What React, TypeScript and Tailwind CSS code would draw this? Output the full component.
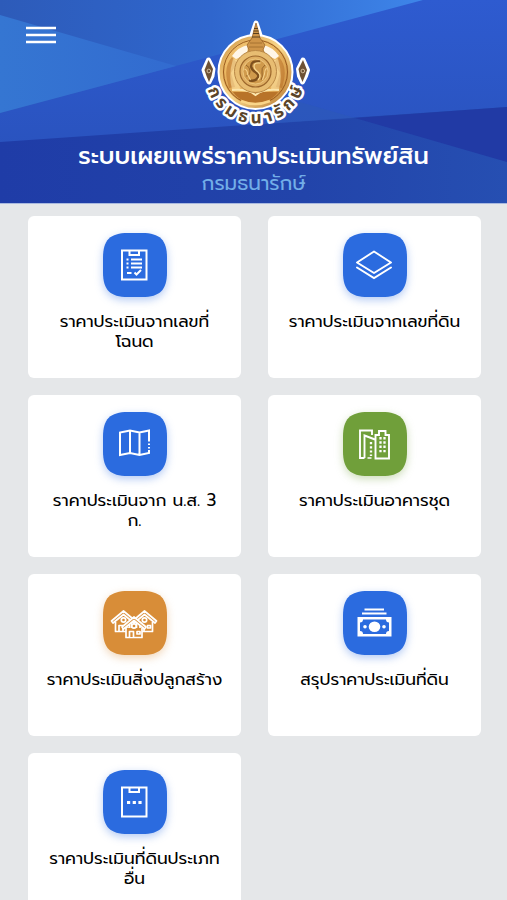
import type { ReactNode } from "react";

type Tone = "blue" | "green" | "orange";

type MenuItem = {
  label: string;
  tone: Tone;
  icon: ReactNode;
};

const TONES: Record<Tone, { fill: string; shadow: string }> = {
  blue: { fill: "fill-[#2b6bdf]", shadow: "drop-shadow-[0_3px_4px_rgba(43,107,223,0.35)]" },
  green: { fill: "fill-[#709f3a]", shadow: "drop-shadow-[0_3px_4px_rgba(112,159,58,0.35)]" },
  orange: { fill: "fill-[#d88d38]", shadow: "drop-shadow-[0_3px_4px_rgba(216,141,56,0.35)]" },
};

const Clipboard = () => (
  <>
    <path d="M19 17.500h24.500v29h-24.500z" />
    <path d="M26.500 17.500v4.500h9.500v-4.500" />
  </>
);

const House = () => (
  <>
    <path d="M-12 1 0-9 12 1l-1.500 2L0-5.500-10.500 3z" />
    <path d="M-8 2v9.500H8V2" />
    <circle cy="0" r="2.200" />
    <path d="M-4.500 11V5.500h4V11M3 5.500h3v2.500H3z" />
  </>
);

const ITEMS: MenuItem[] = [
  {
    label: "ราคาประเมินจากเลขที่โฉนด",
    tone: "blue",
    icon: (
      <>
        <Clipboard />
        <path d="M28 26.500h11M28 30.500h11M28 34.500h11" strokeWidth="2" />
        <path d="M23.500 26.500h2M23.500 30.500h2M23.500 34.500h2M24 40h4.500" strokeWidth="1.800" />
        <path d="m31.500 39.500 2 2 4.500-4.500" strokeWidth="2" />
      </>
    ),
  },
  {
    label: "ราคาประเมินจากเลขที่ดิน",
    tone: "blue",
    icon: (
      <>
        <path d="M31 18.500 48 29.500 31 40 14 29.500z" strokeLinejoin="round" />
        <path d="M14 34.500 31 45 48 34.500" strokeLinecap="round" />
      </>
    ),
  },
  {
    label: "ราคาประเมินจาก น.ส. 3 ก.",
    tone: "blue",
    icon: (
      <>
        <path d="M46 29.500V18.500L36.500 20.500l-9.500-2-10 2v22.500l10-2 9.500 2 9.500-2v-3M27 18.500v22.500M36.500 20.500v22.500" />
        <path d="M46 31.500v1.500M46 35v1.500" />
      </>
    ),
  },
  {
    label: "ราคาประเมินอาคารชุด",
    tone: "green",
    icon: (
      <>
        <path d="M21.500 46H17V18.500h12v4.500M21.500 46V23.500L32 27.500" strokeWidth="1.900" />
        <path d="M32.500 46.500V23h3.500v-4h6.500v4h3.500v23.500z" strokeWidth="1.900" />
        <path d="M37.500 25v17M41.500 25v17" strokeWidth="2.300" strokeDasharray="2.400 1.900" />
        <path d="M28 30v14" strokeWidth="2.300" strokeDasharray="2.200 2" />
        <path d="M24.500 46h4" strokeWidth="1.500" />
      </>
    ),
  },
  {
    label: "ราคาประเมินสิ่งปลูกสร้าง",
    tone: "orange",
    icon: (
      <g strokeWidth="1.700" strokeLinejoin="round">
        <g transform="translate(20.500 29)">
          <House />
        </g>
        <g transform="translate(41.500 29)">
          <House />
        </g>
        <g transform="translate(31 35)" className="fill-[#d88d38]">
          <House />
        </g>
      </g>
    ),
  },
  {
    label: "สรุปราคาประเมินที่ดิน",
    tone: "blue",
    icon: (
      <>
        <path d="M21.500 18.500H41M19 22.500h24.500" strokeWidth="2.200" />
        <path
          d="M14.500 26h34v19.500h-34zM20 28.500q0 3-3 3v8.500q3 0 3 3h23q0-3 3-3v-8.500q-3 0-3-3z"
          fill="white"
          fillRule="evenodd"
          stroke="none"
        />
        <ellipse cx="31.500" cy="35.700" rx="5.800" ry="5.200" fill="white" stroke="none" />
        <circle cx="22" cy="35.700" r="1.800" fill="white" stroke="none" />
        <circle cx="41" cy="35.700" r="1.800" fill="white" stroke="none" />
      </>
    ),
  },
  {
    label: "ราคาประเมินที่ดินประเภทอื่น",
    tone: "blue",
    icon: (
      <>
        <Clipboard />
        <path d="M24 32.500h3.200M29.700 32.500h3.200M35.400 32.500h3.200" strokeWidth="3.200" />
      </>
    ),
  },
];

function HeaderBackdrop() {
  return (
    <svg
      className="absolute inset-0 h-full w-full"
      viewBox="0 0 507 203"
      preserveAspectRatio="none"
      aria-hidden="true"
    >
      <defs>
        <linearGradient id="sky" x1="0" x2="1">
          <stop offset="0" stopColor="#2d5bb9" />
          <stop offset="0.500" stopColor="#2f66cd" />
          <stop offset="1" stopColor="#3e85e9" />
        </linearGradient>
        <linearGradient id="beam" x1="0" x2="1">
          <stop offset="0" stopColor="#3576d2" />
          <stop offset="1" stopColor="#326bd0" />
        </linearGradient>
        <linearGradient id="middle" x1="0" x2="0" y1="0" y2="1">
          <stop offset="0" stopColor="#2e5bd0" />
          <stop offset="1" stopColor="#2850b8" />
        </linearGradient>
        <linearGradient id="floor" x1="0" x2="1">
          <stop offset="0" stopColor="#1f3ca7" />
          <stop offset="0.600" stopColor="#2244aa" />
          <stop offset="1" stopColor="#264fb2" />
        </linearGradient>
      </defs>
      <path d="M0 0h507v203H0z" fill="url(#middle)" />
      <path d="M0 0h423L0 113z" fill="url(#sky)" />
      <path d="M0 15 176 66 0 113z" fill="url(#beam)" />
      <path d="M0 142 507 107v96H0z" fill="url(#floor)" />
      <path d="M355 118 507 107v55z" fill="#213aa5" />
      <path d="M300 102 355 118 250 125z" fill="#2d58b8" opacity="0.600" />
    </svg>
  );
}

function Emblem() {
  return (
    <svg
      className="h-28 w-28 overflow-visible"
      viewBox="198 17 112 112"
      role="img"
      aria-label="กรมธนารักษ์"
    >
      <defs>
        <radialGradient id="gold" cx="0.450" cy="0.400" r="0.650">
          <stop offset="0" stopColor="#fbdc94" />
          <stop offset="0.600" stopColor="#ecb964" />
          <stop offset="1" stopColor="#c07f33" />
        </radialGradient>
        <linearGradient id="rim" x1="0" y1="0" x2="1" y2="1">
          <stop offset="0" stopColor="#d29a48" />
          <stop offset="0.500" stopColor="#fad98e" />
          <stop offset="1" stopColor="#b87a30" />
        </linearGradient>
        <path id="name-arc" d="M205 73A50.500 50.500 0 0 0 306 73" />
      </defs>

      {/* white outline behind disc, spire and side finials */}
      <g fill="white" stroke="white" strokeWidth="5" strokeLinejoin="round">
        <circle cx="255.500" cy="72" r="35.500" />
        <path d="M256 23 259 32 261 39H251L253 32z" />
        <path d="M208.500 60 204 70 206 76 209 82 212 76 213 69z" />
        <path d="M303 60 307.500 70 305.500 76 302.500 82 299.500 76 298.500 69z" />
      </g>

      <text
        className="fill-[#5a4429] stroke-white font-[Noto_Sans_Thai,Noto_Serif_Thai,Loma,Liberation_Sans,sans-serif] text-[17px] font-bold [paint-order:stroke]"
        strokeWidth="5"
        strokeLinejoin="round"
        textAnchor="middle"
      >
        <textPath href="#name-arc" startOffset="50%">
          ก ร ม ธ น า รั ก ษ์
        </textPath>
      </text>

      <circle cx="255.500" cy="72" r="34.500" fill="url(#gold)" stroke="url(#rim)" strokeWidth="3" />
      <circle cx="255.500" cy="72" r="32" fill="none" stroke="#9a5c20" strokeWidth="1" />

      <path d="M232 56q6-9 16-11l-1 9-11 5zM279 56q-6-9-16-11l1 9 11 5z" fill="#fff6e8" />
      <path d="M232 57q-8 9-5 23l2 8 6-1-4-14 6-10zM279 57q8 9 5 23l-2 8-6-1 4-14-6-10z" fill="#b56c26" opacity="0.550" />
      <path d="M233 59l7 2-3 4 3 24h-8q-4-14 1-30zM278 59l-7 2 3 4-3 24h8q4-14-1-30z" fill="#fae0a0" opacity="0.600" />
      <path d="M256 23 258 30 260 38 265 45 263 50 267 57H245l4-7-2-5 5-7 2-8z" fill="#cf9549" stroke="#9a6528" strokeWidth="0.800" />
      <path d="M254 28.500h4M253.500 31h5M253 33.500h6M252 37h8" stroke="#5b401f" />
      <path d="M250 43h12M249 47h14" stroke="#9c6a2c" strokeWidth="0.800" />
      <path d="M233 92h45q-4 6-11 9-11 4-23 0-7-3-11-9z" fill="#b87329" />
      <path d="M232 90q12-1 19 2l4.500 3 4.500-3q7-3 19-2" fill="none" stroke="#fce6ac" strokeWidth="2" />
      <path d="M241 101q14 6 29 0" fill="none" stroke="#fad588" strokeWidth="2.500" />

      <circle cx="255.500" cy="71.500" r="21" fill="#e8bd72" stroke="#b98847" strokeWidth="1" />
      <circle cx="255.500" cy="71.500" r="15.500" fill="#dfae62" stroke="#9c672c" strokeWidth="1.200" />
      <circle cx="255.500" cy="71.500" r="12.500" fill="#d09a4c" stroke="#f3cf8a" strokeWidth="0.800" />
      <path d="M259 61.500q-8-1-8 5 1 4 5 6 4 3 1 6-2 3-7 2" fill="none" stroke="#7e501e" strokeWidth="2.400" strokeLinecap="round" />
      <path d="M260.500 63q-6-1-6.500 3 0 3 4 6 4 4 0 8" fill="none" stroke="#f8d893" strokeWidth="1.200" />
      <path d="M246 65q4 2 4 6 0 5-4 5M265 65q-4 3-3 7 1 5-1 8" fill="none" stroke="#8e5d25" strokeWidth="0.900" />
      <path d="M244.500 69q3 1 3 5l3 6M266.500 68q-2 2-2 6l-2 6" fill="none" stroke="#f5d08a" strokeWidth="1.100" />

      <g fill="#6d5135">
        <path d="M208.500 60 204.500 70 206.500 76 209 82 211.500 76 213 69z" />
        <path d="M303 60 307 70 305 76 302.500 82 300 76 298.500 69z" />
      </g>
      <g fill="none" stroke="#dcc8a8" strokeWidth="0.900">
        <circle cx="208.800" cy="71" r="1.800" />
        <circle cx="302.800" cy="71" r="1.800" />
      </g>
    </svg>
  );
}

function MenuCard({ item }: { item: MenuItem }) {
  const tone = TONES[item.tone];

  return (
    <a
      href="#"
      className="flex min-h-[162px] flex-col items-center rounded-md bg-white px-[18px] pt-[17px] text-center"
    >
      <svg
        className={`h-16 w-16 shrink-0 ${tone.shadow}`}
        viewBox="0 0 64 64"
        fill="none"
        stroke="white"
        strokeWidth="2"
        aria-hidden="true"
      >
        <path
          d="M25 0h14C57 0 64 7 64 25v14C64 57 57 64 39 64H25C7 64 0 57 0 39V25C0 7 7 0 25 0z"
          className={tone.fill}
          stroke="none"
        />
        {item.icon}
      </svg>
      <span className="mt-3.5 text-[17px] leading-5 text-black">{item.label}</span>
    </a>
  );
}

export default function App() {
  return (
    <div className="h-screen overflow-hidden bg-[#e5e7e9] font-[Prompt,Kanit,Noto_Sans_Thai,Noto_Sans,sans-serif]">
      <header className="relative border-b border-[#a9b9df] pb-2">
        <HeaderBackdrop />
        <button type="button" aria-label="เมนู" className="absolute left-6 top-6 p-0.5">
          <svg className="h-5 w-[30px]" viewBox="0 0 30 20" stroke="white" strokeWidth="2.400" aria-hidden="true">
            <path d="M0 2h30M0 9h30M0 16h30" />
          </svg>
        </button>
        <div className="relative flex flex-col items-center pt-[17px] text-center">
          <Emblem />
          <h1 className="mt-3 text-2xl leading-[30px] font-medium text-white">
            ระบบเผยแพร่ราคาประเมินทรัพย์สิน
          </h1>
          <p className="text-xl leading-6 text-[#72aee8]">กรมธนารักษ์</p>
        </div>
      </header>

      <main className="grid grid-cols-2 gap-x-[27px] gap-y-[17px] pt-3 pr-[26px] pl-7">
        {ITEMS.map((item) => (
          <MenuCard key={item.label} item={item} />
        ))}
      </main>
    </div>
  );
}
